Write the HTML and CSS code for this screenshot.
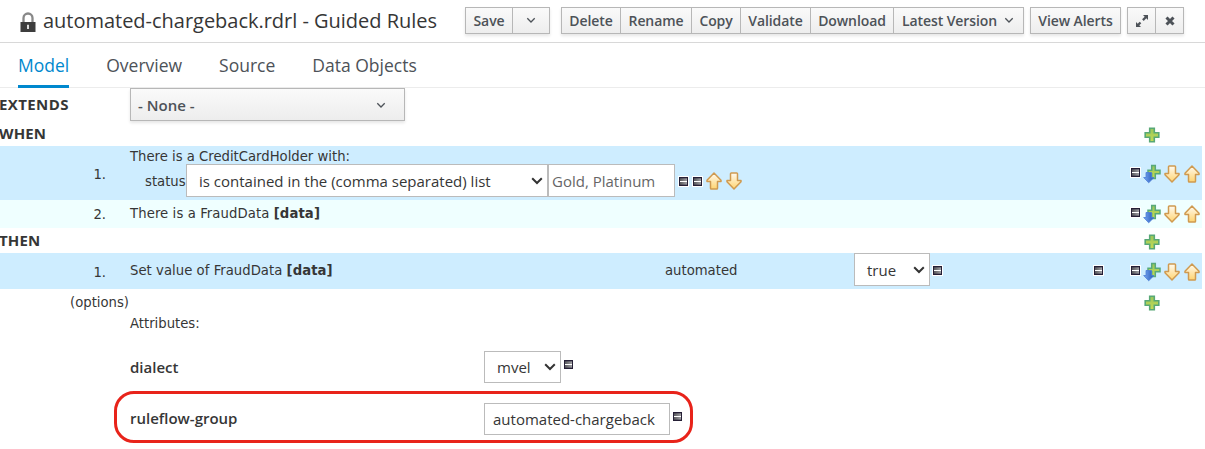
FILE: index.html
```html
<!DOCTYPE html>
<html lang="en">
<head>
<meta charset="utf-8">
<title>automated-chargeback.rdrl - Guided Rules</title>
<link rel="stylesheet" href="styles.css">
</head>
<body>
<svg class="defs" width="0" height="0" aria-hidden="true">
  <defs>
    <linearGradient id="gold" x1="0" y1="0" x2="0" y2="1"><stop offset="0" stop-color="#fffaf0"/><stop offset="1" stop-color="#ffd470"/></linearGradient>
    <linearGradient id="green" x1="0" y1="0" x2="0" y2="1"><stop offset="0" stop-color="#98c65a"/><stop offset="1" stop-color="#c6dc55"/></linearGradient>
    <linearGradient id="blue" x1="0" y1="0" x2="1" y2="0"><stop offset="0" stop-color="#79a9f2"/><stop offset="1" stop-color="#2355b8"/></linearGradient>
    <linearGradient id="bar" x1="0" y1="0" x2="1" y2="0"><stop offset="0" stop-color="#58585c"/><stop offset="1" stop-color="#a0a0a4"/></linearGradient>
  </defs>
  <symbol id="up" viewBox="0 0 16 18"><path d="M8 1 15 8.2V9.6H11.5V16.2Q11.5 17 10.7 17H5.3Q4.500 17 4.500 16.200V9.600H1V8.200Z" fill="url(#gold)" stroke="#cf9a50" stroke-width="1.500" stroke-linejoin="round"/></symbol>
  <symbol id="down" viewBox="0 0 16 18"><path d="M8 17 15 9.800V8.400H11.500V1.800Q11.500 1 10.700 1H5.300Q4.500 1 4.500 1.800V8.400H1V9.800Z" fill="url(#gold)" stroke="#cf9a50" stroke-width="1.500" stroke-linejoin="round"/></symbol>
  <symbol id="plus" viewBox="0 0 16 16"><path d="M5.700 1.200H10.300V5.700H14.800V10.300H10.300V14.800H5.700V10.300H1.200V5.700H5.700Z" fill="url(#green)" stroke="#58a876" stroke-width="1.600"/></symbol>
  <symbol id="insert" viewBox="0 0 18 20"><path d="M8.700 1.500H12.300V6.200H17V9.800H12.300V14.500H8.700V9.800H5V6.200H8.700Z" fill="url(#green)" stroke="#58a97a" stroke-width="1.500"/><path d="M3 8.500H8.500V13.500H11L5.700 18.800.7 13.500H3Z" fill="url(#blue)" stroke="#4c7dd6" stroke-width=".8"/></symbol>
  <symbol id="minus" viewBox="0 0 11 11"><path d="M0 0H11V11H0Z" fill="#fff"/><path d="M1 1H10V10H1Z" fill="#251f36"/><path d="M2 2.300H9V8.700H2Z" fill="url(#bar)"/><path d="M2 5H9V6H2Z" fill="#fff"/></symbol>
  <symbol id="chev" viewBox="0 0 10 7"><path d="M1.300 1.300 5 5 8.700 1.300" fill="none" stroke="currentColor" stroke-width="1.300"/></symbol>
  <symbol id="pick" viewBox="0 0 12 8"><path d="M1.200 1.300 6 6 10.800 1.300" fill="none" stroke="currentColor" stroke-width="2"/></symbol>
</svg>

<header class="titlebar">
  <svg class="lock" viewBox="0 0 16 20"><path d="M3.500 10V6a4.500 4.500 0 0 1 9 0v4" fill="none" stroke="#888" stroke-width="2.300"/><path d="M.5 10H15.500V20H.5Z" fill="#3d3d3d"/><path d="M7 12.700H9V17H7Z" fill="#ddd"/></svg>
  <h1 class="title">automated-chargeback.rdrl - Guided Rules</h1>
  <div class="toolbar">
    <div class="group g-save"><button class="b-save">Save</button><button class="b-more"><svg class="chev"><use href="#chev"/></svg></button></div>
    <div class="group g-main"><button class="b-delete">Delete</button><button class="b-rename">Rename</button><button class="b-copy">Copy</button><button class="b-validate">Validate</button><button class="b-download">Download</button><button class="b-latest">Latest Version<svg class="chev"><use href="#chev"/></svg></button></div>
    <div class="group g-alerts"><button class="b-alerts">View Alerts</button></div>
    <div class="group"><button class="b-icon"><svg width="12" height="12" viewBox="0 0 12 12" fill="#4d5258"><path d="M7 0H12V5L10.300 3.300 7.700 5.900 6.100 4.300 8.700 1.700ZM0 7 1.700 8.700 3.700 6.700 5.300 8.300 3.300 10.300 5 12H0Z"/></svg></button><button class="b-icon"><svg width="10" height="10" viewBox="0 0 10 10"><path d="M1.500 1.500 8.500 8.500M8.500 1.500 1.500 8.500" stroke="#4d5258" stroke-width="3"/></svg></button></div>
  </div>
</header>

<nav class="tabs"><a class="tab active">Model</a><a class="tab">Overview</a><a class="tab">Source</a><a class="tab">Data Objects</a></nav>

<main class="editor">
  <section class="row extends"><b class="heading">EXTENDS</b><div class="parent"><span>- None -</span><svg class="chev"><use href="#chev"/></svg></div></section>
  <section class="row when"><b class="heading">WHEN</b><svg class="plus"><use href="#plus"/></svg></section>
  <section class="row pattern blue">
    <span class="num">1.</span>
    <div class="body">
      <div class="sentence s1">There is a CreditCardHolder with:</div>
      <div class="field"><span class="status">status</span><div class="select operator"><span>is contained in the (comma separated) list</span><svg class="pick"><use href="#pick"/></svg></div><div class="input values">Gold, Platinum</div><svg class="minus"><use href="#minus"/></svg><svg class="minus"><use href="#minus"/></svg><svg class="arrow"><use href="#up"/></svg><svg class="arrow"><use href="#down"/></svg></div>
    </div>
    <div class="actions"><svg class="minus"><use href="#minus"/></svg><svg class="insert"><use href="#insert"/></svg><svg class="arrow"><use href="#down"/></svg><svg class="arrow"><use href="#up"/></svg></div>
  </section>
  <section class="row fact mint">
    <span class="num">2.</span>
    <div class="body sentence s2">There is a FraudData <b>[data]</b></div>
    <div class="actions"><svg class="minus"><use href="#minus"/></svg><svg class="insert"><use href="#insert"/></svg><svg class="arrow"><use href="#down"/></svg><svg class="arrow"><use href="#up"/></svg></div>
  </section>
  <section class="row then"><b class="heading">THEN</b><svg class="plus"><use href="#plus"/></svg></section>
  <section class="row action blue">
    <span class="num">1.</span>
    <div class="body assign"><div class="sentence s3">Set value of FraudData <b>[data]</b></div><span class="property">automated</span><div class="select truth"><span>true</span><svg class="pick"><use href="#pick"/></svg></div><svg class="minus"><use href="#minus"/></svg></div>
    <svg class="minus remove"><use href="#minus"/></svg>
    <div class="actions"><svg class="minus"><use href="#minus"/></svg><svg class="insert"><use href="#insert"/></svg><svg class="arrow"><use href="#down"/></svg><svg class="arrow"><use href="#up"/></svg></div>
  </section>
  <section class="row options"><span class="options-label">(options)</span><svg class="plus"><use href="#plus"/></svg></section>
  <section class="attributes">
    <div class="attr-title">Attributes:</div>
    <div class="attr"><b>dialect</b><div class="select dialect"><span>mvel</span><svg class="pick"><use href="#pick"/></svg></div><svg class="minus"><use href="#minus"/></svg></div>
    <div class="attr ringed"><b>ruleflow-group</b><div class="input group-name">automated-chargeback</div><svg class="minus"><use href="#minus"/></svg></div>
  </section>
</main>
</body>
</html>
```
FILE: styles.css
```css
* { box-sizing: border-box; }
body { margin: 0; background: #fff; color: #363636; font-family: "Open Sans", sans-serif; font-size: 15px; height: 449px; overflow: hidden; }
svg { display: block; flex: none; }
.defs { position: absolute; }
.titlebar { height: 43px; border-bottom: 1px solid #d8d8d8; display: flex; align-items: flex-start; padding-left: 20px; }
.lock { width: 16px; height: 20px; margin-top: 12px; }
.title { margin: 0 0 0 7px; width: 422px; font-size: 20px; font-weight: 400; line-height: 41px; letter-spacing: -.02px; white-space: nowrap; }
.toolbar { display: flex; padding-top: 7px; }
.group { display: flex; height: 27px; border: 1px solid #b7b7b7; background: linear-gradient(#fafafa, #ededed); box-shadow: 0 2px 3px rgba(0,0,0,.1); }
.group button { border: 0; border-left: 1px solid #b7b7b7; padding: 0; background: none; font: 600 14px/25px "Open Sans", sans-serif; letter-spacing: -.1px; color: #4d5258; white-space: nowrap; display: flex; align-items: center; justify-content: center; }
.group button:first-child { border-left: 0; }
.chev { width: 10px; height: 7px; color: #4d5258; }
.g-save { margin-right: 11px; }
.g-main { margin-right: 6px; }
.g-alerts { margin-right: 6px; }
.b-save { width: 46px; }
.b-more { width: 37px; }
.b-delete { width: 58px; }
.b-rename { width: 71px; }
.b-copy { width: 49px; }
.b-validate { width: 70px; }
.b-download { width: 83px; }
.group .b-latest { width: 130px; gap: 7px; padding-right: 1px; }
.b-alerts { width: 89px; }
.group .b-icon { width: 28px; }
.group .b-icon:first-child { width: 27px; }
.tabs { height: 45px; border-bottom: 1px solid #ececec; display: flex; gap: 37px; padding-left: 18px; }
.tab { height: 45px; font-size: 17.5px; line-height: 44px; color: #4d5258; }
.tab.active { color: #0088ce; border-bottom: 3px solid #0088ce; }
.editor { width: 1202px; }
.row { display: flex; position: relative; }
.heading { font-size: 15px; line-height: 20px; margin-left: -1px; letter-spacing: .15px; }
.extends { height: 34px; padding-top: 0; }
.extends .heading { width: 131px; line-height: 32px; letter-spacing: .4px; }
.parent { width: 275px; height: 33px; display: flex; align-items: center; justify-content: space-between; padding: 0 18px 0 7px; border: 1px solid #b7b7b7; background: linear-gradient(#fafafa, #ededed); box-shadow: 0 2px 3px rgba(0,0,0,.1); color: #4d5258; font-weight: 600; font-size: 15px; }
.parent .chev { margin-top: 2px; }
.when { height: 24px; }
.when .heading { line-height: 23px; }
.then { height: 25px; }
.then .heading { line-height: 25px; }
.plus { width: 16px; height: 16px; margin: 5px 42px 0 auto; }
.then .plus, .options .plus { margin-top: 6px; }
.blue { background: #ceedff; }
.mint { background: #efffff; }
.num { width: 130px; padding-right: 24px; text-align: right; font: 14.7px/20px "DejaVu Sans Condensed", sans-serif; }
.sentence, .status, .property, .options-label, .attr-title { font-family: "DejaVu Sans Condensed", "DejaVu Sans", sans-serif; font-stretch: condensed; font-size: 14.7px; line-height: 20px; white-space: nowrap; }
.pattern { height: 54px; }
.pattern .num { padding-top: 18px; }
.body { width: 1000px; }
.s1 { height: 18px; }
.s2 { letter-spacing: .1px; }
.field { display: flex; padding-left: 15px; align-items: center; }
.status { width: 41px; }
.select, .input { height: 33px; border: 1px solid #bbb; background: #fff; display: flex; align-items: center; white-space: nowrap; }
.select { justify-content: space-between; color: #363636; }
.pick { width: 12px; height: 8px; color: #333; }
.operator { width: 362px; padding: 0 4px 0 12px; }
.values { width: 127px; padding-left: 3px; margin-right: 3px; color: #666; }
.minus { width: 11px; height: 11px; }
.arrow { width: 16px; height: 18px; }
.field .minus { margin: 1px 3px 0 0; }
.field .arrow { margin: 1px 4px 0 0; }
.actions { display: flex; align-items: center; height: 20px; margin: 18px 0 0 0; }
.actions .minus { margin-top: -3px; }
.actions .insert { width: 18px; height: 20px; margin: 0 3px 0 2px; }
.actions .arrow + .arrow { margin-left: 4px; }
.fact { height: 28px; }
.fact .num { padding-top: 4px; }
.fact .sentence { padding-top: 3px; }
.fact .actions { margin-top: 4px; }
.action { height: 36px; }
.action .num { padding-top: 9px; }
.action .actions { margin-top: 9px; }
.assign { display: flex; align-items: flex-start; width: 963px; }
.s3 { width: 535px; padding-top: 7px; letter-spacing: .04px; }
.property { width: 189px; padding-top: 7px; }
.truth { width: 76px; padding: 0 4px 0 12px; }
.assign .minus { margin: 12px 0 0 2px; }
.remove { margin: 12px 26px 0 0; }
.options { height: 24px; padding-left: 70px; }
.options-label { padding-top: 3px; }
.attributes { padding-left: 130px; }
.attr-title { height: 37px; }
.attr { display: flex; }
.attr b { width: 354px; font-weight: 600; line-height: 35px; }
.attr .minus { margin: 9px 0 0 2px; }
.dialect { width: 77px; height: 32px; padding: 0 4px 0 12px; margin-top: 1px; }
.ringed { width: 579px; height: 52px; margin: 6px 0 0 -16px; padding: 9px 0 0 13px; border: 3px solid #e8231a; border-radius: 20px; }
.ringed b { line-height: 31px; }
.ringed .minus { margin-top: 8px; }
.group-name { width: 186px; height: 32px; padding-left: 8px; }
```
